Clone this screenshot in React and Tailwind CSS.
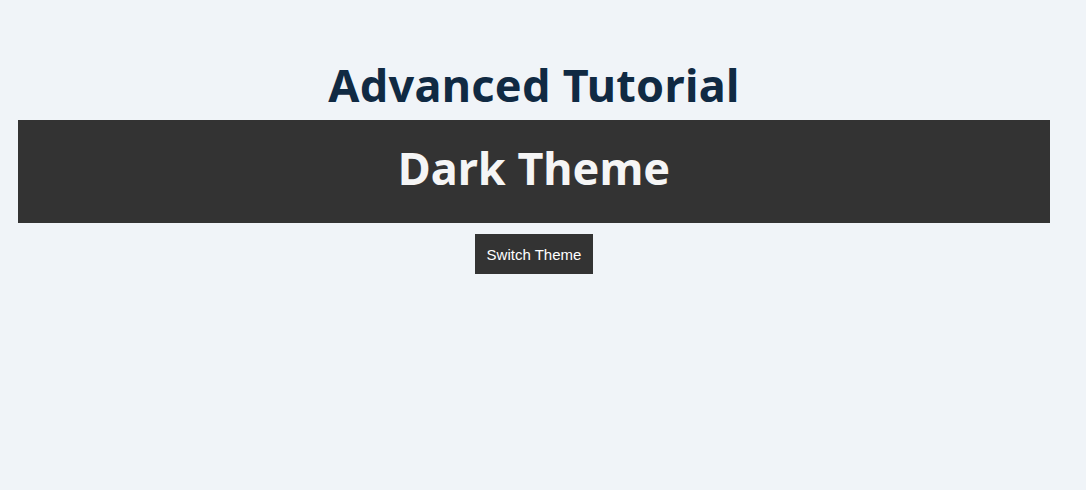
export default function App() {
  return (
    <div className="min-h-[490px] w-full bg-[#f0f4f8]" style={{ fontFamily: '"Noto Sans", sans-serif' }}>
      <div className="ml-[18px] w-[1032px] pt-[50px] flex flex-col items-center">
        <h1 className="text-[45px] leading-[70px] font-bold text-[#102a43] text-center tracking-[0.3px]">Advanced Tutorial</h1>
        <div className="w-full h-[103px] bg-[#333333] flex items-center justify-center">
          <h2 className="text-[45px] leading-[70px] font-bold text-[#f5f5f5] mb-[8px]">Dark Theme</h2>
        </div>
        <button
          className="mt-[11px] h-[40px] px-[12px] pt-[2px] bg-[#333333] text-white text-[15px]"
          style={{ fontFamily: '"Liberation Sans", Arial, sans-serif' }}
        >
          Switch Theme
        </button>
      </div>
    </div>
  );
}
